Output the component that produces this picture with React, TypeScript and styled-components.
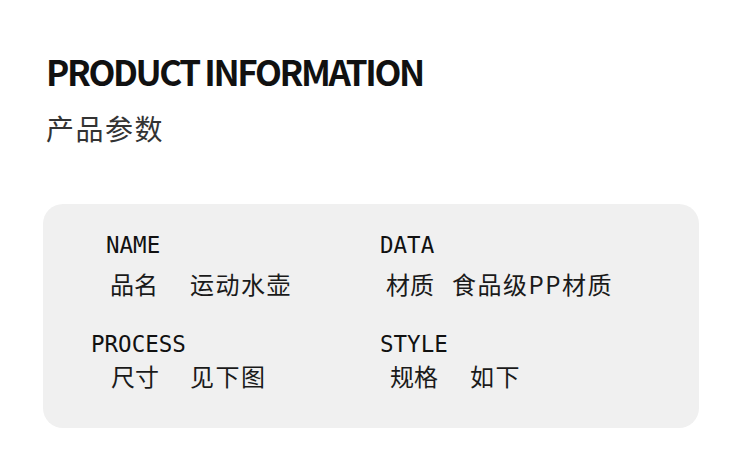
import React from "react";
import styled, { createGlobalStyle } from "styled-components";

const GlobalStyle = createGlobalStyle`
  html, body {
    margin: 0;
    padding: 0;
    background: #ffffff;
  }
`;

type Spec = {
  label: string;
  keyText: string;
  value: string;
  labelIndent: number;
  valueIndent: number;
  keyGap: number;
  spacing: number;
};

const specs: Spec[] = [
  { label: "NAME", keyText: "品名", value: "运动水壶", labelIndent: 15, valueIndent: 19, keyGap: 32, spacing: 11 },
  { label: "DATA", keyText: "材质", value: "食品级PP材质", labelIndent: 0, valueIndent: 6, keyGap: 18, spacing: 11 },
  { label: "PROCESS", keyText: "尺寸", value: "见下图", labelIndent: 0, valueIndent: 20, keyGap: 31, spacing: 4 },
  { label: "STYLE", keyText: "规格", value: "如下", labelIndent: 0, valueIndent: 10, keyGap: 32, spacing: 4 },
];

const App = () => {
  return (
    <>
      <GlobalStyle />
      <Page>
        <Title>PRODUCT INFORMATION</Title>
        <Subtitle>产品参数</Subtitle>
        <Card>
          {specs.map((s) => (
            <Item key={s.label} $spacing={s.spacing}>
              <Label $indent={s.labelIndent}>{s.label}</Label>
              <ValueRow $indent={s.valueIndent} $gap={s.keyGap}>
                <Key>{s.keyText}</Key>
                <Value>{s.value}</Value>
              </ValueRow>
            </Item>
          ))}
        </Card>
      </Page>
    </>
  );
};

const Page = styled.div`
  width: 750px;
  height: 459px;
  box-sizing: border-box;
  padding: 53px 0 0 43px;
  overflow: hidden;
`;

const Title = styled.h1`
  margin: 0 0 0 3px;
  font-family: "Noto Sans CJK SC", "Noto Sans", sans-serif;
  font-weight: 700;
  font-size: 35px;
  line-height: 36px;
  letter-spacing: -2.4px;
  color: #111111;
`;

const Subtitle = styled.div`
  margin: 25px 0 0 3px;
  font-family: "Noto Sans CJK SC", sans-serif;
  font-size: 28px;
  line-height: 28px;
  letter-spacing: 1.5px;
  color: #333333;
`;

const Card = styled.div`
  margin-top: 62px;
  width: 656px;
  height: 224px;
  box-sizing: border-box;
  padding: 28px 0 0 48px;
  background: #f0f0f0;
  border-radius: 20px;
  display: grid;
  grid-template-columns: 289px 1fr;
  row-gap: 32px;
  align-content: start;
`;

const Item = styled.div<{ $spacing: number }>`
  display: flex;
  flex-direction: column;
  gap: ${(p) => p.$spacing}px;
`;

const Label = styled.div<{ $indent: number }>`
  padding-left: ${(p) => p.$indent}px;
  font-family: "DejaVu Sans Mono", "Liberation Mono", monospace;
  font-size: 22.5px;
  line-height: 26px;
  color: #111111;
`;

const ValueRow = styled.div<{ $indent: number; $gap: number }>`
  display: flex;
  gap: ${(p) => p.$gap}px;
  padding-left: ${(p) => p.$indent}px;
  font-family: "Noto Sans CJK SC", sans-serif;
  font-size: 24px;
  line-height: 30px;
  color: #1a1a1a;
`;

const Key = styled.span`
  letter-spacing: 0;
`;

const Value = styled.span`
  letter-spacing: 1.5px;
`;

export default App;
